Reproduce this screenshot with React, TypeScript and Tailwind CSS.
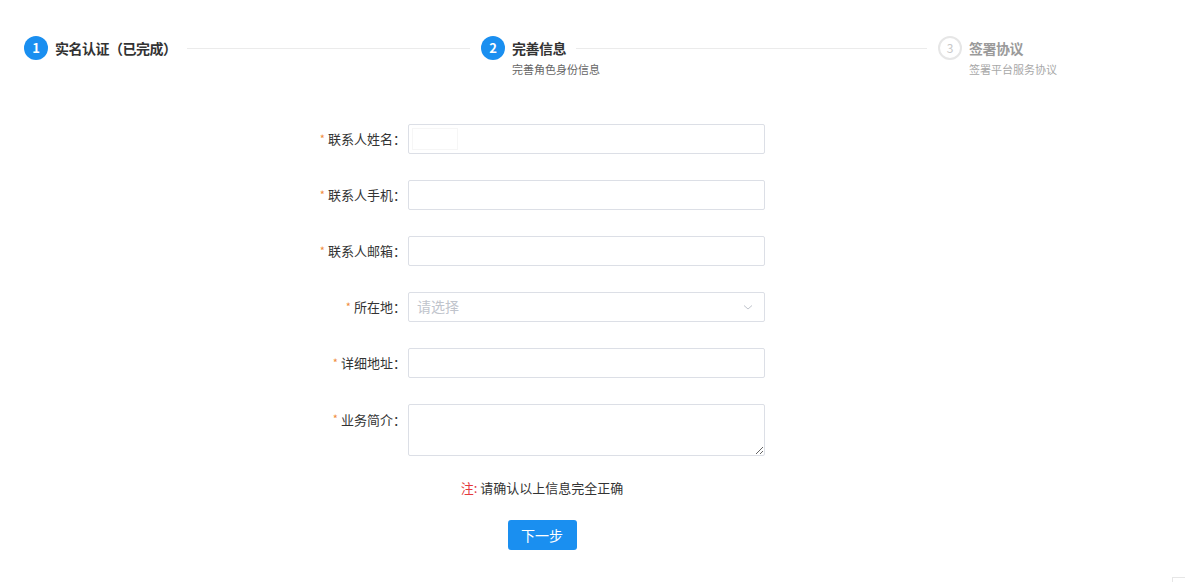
import React from 'react';

const font = { fontFamily: '"Noto Sans CJK SC", "Liberation Sans", sans-serif' };

type Step = { no: number; title: string; desc?: string; state: 'done' | 'active' | 'wait' };

const steps: Step[] = [
  { no: 1, title: '实名认证（已完成）', state: 'done' },
  { no: 2, title: '完善信息', desc: '完善角色身份信息', state: 'active' },
  { no: 3, title: '签署协议', desc: '签署平台服务协议', state: 'wait' },
];

function StepItem({ step, last }: { step: Step; last: boolean }) {
  const wait = step.state === 'wait';
  return (
    <div className={last ? 'flex-1' : 'w-[457px] shrink-0'}>
      <div className="flex items-center h-[24px]">
        {wait ? (
          <div className="w-[24px] h-[24px] rounded-full border-2 border-[#e6e6e6] flex items-center justify-center text-[12px] text-[#c8c8c8] shrink-0">
            {step.no}
          </div>
        ) : (
          <div className="w-[24px] h-[24px] rounded-full bg-[#1a8ff0] flex items-center justify-center text-[13px] font-bold text-white shrink-0">
            {step.no}
          </div>
        )}
        <span
          className={
            'ml-[7px] text-[14px] font-bold whitespace-nowrap tracking-[-0.5px] ' +
            (wait ? 'text-[#9a9a9a]' : 'text-[#333333]')
          }
        >
          {step.title}
        </span>
        {!last && <div className="flex-1 h-px bg-[#ebebeb] ml-[10px] mr-[11px]" />}
      </div>
      {step.desc && (
        <div
          className={
            'pl-[31px] mt-[1px] text-[11px] ' + (wait ? 'text-[#a8a8a8]' : 'text-[#666666]')
          }
        >
          {step.desc}
        </div>
      )}
    </div>
  );
}

function Label({ text, top }: { text: string; top?: boolean }) {
  return (
    <div
      className={
        'w-[115px] shrink-0 pr-[2px] flex justify-end text-[13px] text-[#333333] ' +
        (top ? 'items-start pt-[6px]' : 'items-center')
      }
    >
      <span className="text-[#f08a3c] text-[11px] mr-[3px]">*</span>
      <span>{text}：</span>
    </div>
  );
}

const inputCls =
  'w-[357px] h-[30px] border border-[#dcdfe6] rounded-[2px] bg-white px-[8px] text-[14px] outline-none';

export default function App() {
  return (
    <div className="relative w-[1185px] h-[582px] bg-white overflow-hidden" style={font}>
      {/* 步骤条 */}
      <div className="flex pl-[24px] pt-[36px]">
        {steps.map((s, i) => (
          <StepItem key={s.no} step={s} last={i === steps.length - 1} />
        ))}
      </div>

      {/* 表单 */}
      <div className="pl-[293px] mt-[46px] flex flex-col gap-[26px]">
        <div className="flex">
          <Label text="联系人姓名" />
          <div className={inputCls + ' relative'}>
            <div className="absolute left-[3px] top-[3px] w-[46px] h-[22px] border border-[#f6f6f6]" />
          </div>
        </div>
        <div className="flex">
          <Label text="联系人手机" />
          <input className={inputCls} />
        </div>
        <div className="flex">
          <Label text="联系人邮箱" />
          <input className={inputCls} />
        </div>
        <div className="flex">
          <Label text="所在地" />
          <div className={inputCls + ' flex items-center justify-between'}>
            <span className="text-[#c0c4cc] text-[14px]">请选择</span>
            <svg width="12" height="12" viewBox="0 0 12 12" className="mr-[2px]">
              <path d="M2 4.5 L6 8 L10 4.5" fill="none" stroke="#c0c4cc" strokeWidth="1" />
            </svg>
          </div>
        </div>
        <div className="flex">
          <Label text="详细地址" />
          <input className={inputCls} />
        </div>
        <div className="flex">
          <Label text="业务简介" top />
          <textarea className="w-[357px] h-[52px] border border-[#dcdfe6] rounded-[2px] bg-white px-[8px] py-[4px] text-[14px] outline-none" />
        </div>
      </div>

      <div className="ml-[293px] w-[498px] mt-[22px] text-center text-[13px] text-[#333333]">
        <span className="text-[#e4393c]">注: </span>请确认以上信息完全正确
      </div>

      <div className="ml-[293px] w-[498px] mt-[23px] flex justify-center">
        <button className="w-[69px] h-[30px] bg-[#1a8ff0] rounded-[3px] text-white text-[14px]">
          下一步
        </button>
      </div>

      <div className="absolute left-[1172px] top-[577px] w-[20px] h-[10px] border-t border-l border-[#e6e6e6]" />
    </div>
  );
}
